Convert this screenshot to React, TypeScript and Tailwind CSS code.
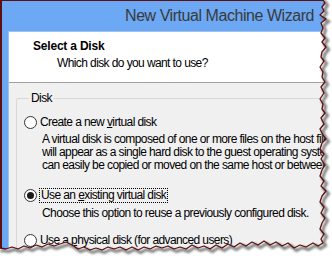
import React from "react";

const rightEdge: [number, number][] = [
  [322, -2], [325, 3], [322, 7], [324, 11], [320, 15], [326, 19], [321, 23], [323, 28], [321, 33], [325, 38],
  [322, 42], [326, 47], [322, 52], [321, 57], [324, 61], [320, 67], [323, 72], [322, 77], [325, 82], [321, 87],
  [324, 93], [320, 99], [323, 104], [322, 109], [325, 113], [321, 118], [324, 124], [320, 129], [323, 135],
  [326, 139], [322, 143], [320, 149], [324, 154], [321, 159], [325, 165], [322, 170], [320, 176], [324, 181],
  [321, 186], [326, 191], [322, 196], [320, 202], [324, 207], [321, 213], [325, 218], [322, 223], [320, 229],
  [324, 234], [321, 239], [323, 243],
];
const bottomEdge: [number, number][] = [
  [318, 246], [313, 243], [306, 247], [300, 245], [294, 248], [288, 243], [282, 246], [276, 242], [270, 245],
  [264, 241], [258, 245], [252, 242], [246, 246], [240, 243], [234, 247], [228, 244], [222, 248], [216, 245],
  [210, 249], [204, 246], [198, 248], [192, 245], [186, 249], [180, 247], [174, 249], [168, 246], [162, 248],
  [156, 246], [150, 249], [144, 247], [138, 250], [132, 247], [126, 250], [120, 247], [114, 249], [108, 247],
  [102, 250], [96, 248], [90, 250], [84, 247], [78, 249], [72, 245], [66, 242], [60, 244], [54, 246], [48, 244],
  [42, 247], [36, 245], [30, 248], [24, 246], [18, 249], [12, 247], [6, 249], [0, 248], [-2, 249],
];
const edge = [...rightEdge, ...bottomEdge];
const edgeLine = "M" + edge.map(([x, y]) => `${x},${y}`).join(" L");
const outside = edgeLine + " L-2,260 L340,260 L340,-2 Z";

function Radio({ checked }: { checked?: boolean }) {
  return (
    <div className="w-[13px] h-[13px] rounded-full border border-[#333333] bg-white flex items-center justify-center shrink-0">
      {checked && <div className="w-[7px] h-[7px] rounded-full bg-[#1a1a1a]" />}
    </div>
  );
}

export default function App() {
  const font = { fontFamily: '"Liberation Sans", Arial, sans-serif' };
  return (
    <div className="relative w-[332px] h-[256px] overflow-hidden bg-white" style={font}>
      <div className="w-[332px] h-[256px] border-l-2 border-t border-[#5e0f0f] bg-[#6ca8f3] flex flex-col">
        <div className="h-[30px] flex items-center justify-end pr-[18px] shrink-0">
          <span className="text-[16px] tracking-[-0.45px] text-[#3a3a3a]">New Virtual Machine Wizard</span>
        </div>
        <div className="ml-[6px] flex-1 flex flex-col bg-[#f0f0f0] border-l border-t border-[#9cc3f3]">
          <div className="h-[51px] bg-white border-b border-[#a0a0a0] pl-[24px] pt-[7px] text-[#000] shrink-0">
            <div className="text-[12px] font-bold tracking-[-0.2px] leading-[14px]">Select a Disk</div>
            <div className="text-[12px] tracking-[-0.6px] leading-[14px] mt-[3px] pl-[24px]">Which disk do you want to use?</div>
          </div>
          <div className="pl-[7px] pt-[8px]">
            <fieldset className="border border-[#d8d8d8] rounded-[2px] h-[200px] px-[7px] text-[12px] tracking-[-0.6px] leading-[13px] text-black">
              <legend className="ml-[5px] px-[2px] text-[12px] leading-[14px]">Disk</legend>
              <div className="flex items-center gap-[3px] mt-[10px] h-[14px]">
                <Radio />
                <span>Create a new <u>v</u>irtual disk</span>
              </div>
              <div className="pl-[18px] mt-[4px] whitespace-nowrap">
                <div>A virtual disk is composed of one or more files on the host file system, which</div>
                <div>will appear as a single hard disk to the guest operating system. Virtual disks</div>
                <div>can easily be copied or moved on the same host or between hosts.</div>
              </div>
              <div className="flex items-center gap-[2px] mt-[16px] h-[15px]">
                <Radio checked />
                <span className="border border-dotted border-black px-[1px] leading-[13px]">Use an <u>e</u>xisting virtual disk</span>
              </div>
              <div className="pl-[18px] mt-[4px] whitespace-nowrap">Choose this option to reuse a previously configured disk.</div>
              <div className="flex items-center gap-[3px] mt-[13px] h-[14px]">
                <Radio />
                <span>Use a <u>p</u>hysical disk (for advanced users)</span>
              </div>
            </fieldset>
          </div>
        </div>
      </div>
      <svg className="absolute inset-0 pointer-events-none" width="332" height="256" viewBox="0 0 332 256">
        <defs>
          <filter id="blur" x="-10%" y="-10%" width="120%" height="120%">
            <feGaussianBlur stdDeviation="1.2" />
          </filter>
        </defs>
        <path d={outside} fill="#ffffff" />
        <path d={edgeLine} fill="none" stroke="#6a6a6a" strokeWidth="3" transform="translate(2.5,2.5)" filter="url(#blur)" opacity="0.85" />
        <path d={edgeLine} fill="none" stroke="#5e0f0f" strokeWidth="1.3" strokeLinejoin="round" />
      </svg>
    </div>
  );
}
